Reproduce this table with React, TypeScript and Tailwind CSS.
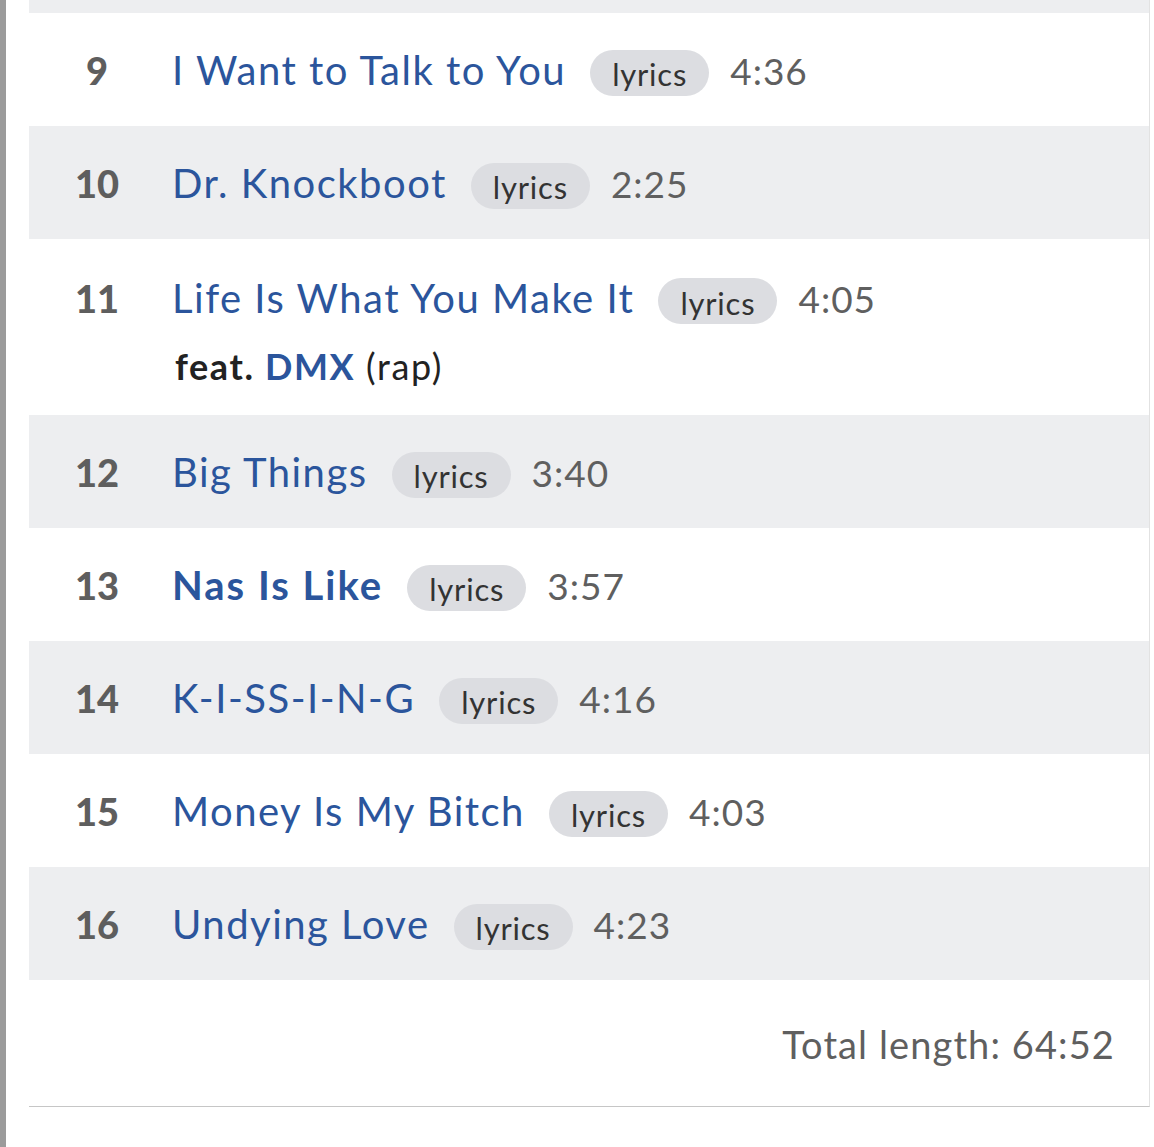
import React from "react";

type Track = {
  n: number;
  title: string;
  time: string;
  bold?: boolean;
  feat?: { name: string; role: string };
};

const tracks: Track[] = [
  { n: 9, title: "I Want to Talk to You", time: "4:36" },
  { n: 10, title: "Dr. Knockboot", time: "2:25" },
  { n: 11, title: "Life Is What You Make It", time: "4:05", feat: { name: "DMX", role: "rap" } },
  { n: 12, title: "Big Things", time: "3:40" },
  { n: 13, title: "Nas Is Like", time: "3:57", bold: true },
  { n: 14, title: "K-I-SS-I-N-G", time: "4:16" },
  { n: 15, title: "Money Is My Bitch", time: "4:03" },
  { n: 16, title: "Undying Love", time: "4:23" },
];

function Row({ t, shaded }: { t: Track; shaded: boolean }) {
  return (
    <div className={`flex ${t.feat ? "h-[176px] pt-[27px]" : "h-[113px] items-center"} ${shaded ? "bg-[#edeef0]" : "bg-white"}`}>
      <div className="w-[136px] shrink-0 text-center text-[38px] font-black text-[#5e5e5e] leading-[64px]">
        {t.n}
      </div>
      <div className="ml-[7px] flex flex-col">
        <div className="flex h-[64px] items-center">
          <span className={`text-[40px] text-[#2b559c] ${t.bold ? "font-bold tracking-[2px]" : "font-normal tracking-[1.5px]"}`}>
            {t.title}
          </span>
          <span className="ml-[24px] mt-[6px] flex h-[46px] items-center rounded-full bg-[#dcdde1] px-[22px] pt-[4px] text-[31px] tracking-[0.8px] text-[#333]">
            lyrics
          </span>
          <span className="ml-[21px] mt-[2px] text-[37px] tracking-[1px] text-[#5f5f5f]">{t.time}</span>
        </div>
        {t.feat && (
          <div className="ml-[3px] mt-[16px] text-[36px] tracking-[1.6px] text-[#222] leading-[40px]">
            <span className="font-bold">feat. </span>
            <span className="font-bold text-[#2b559c]">{t.feat.name}</span> ({t.feat.role})
          </div>
        )}
      </div>
    </div>
  );
}

export default function App() {
  return (
    <div className="flex h-[1147px] w-[1154px] bg-white font-['Lato',sans-serif]">
      <div className="w-[6px] shrink-0 bg-[#9b9b9b]" />
      <div className="ml-[23px] w-[1121px]">
        <div className="border-r border-b border-r-[#e2e2e2] border-b-[#c6c6c6]">
          <div className="h-[13px] bg-[#edeef0]" />
          {tracks.map((t, i) => (
            <Row key={t.n} t={t} shaded={i % 2 === 1} />
          ))}
          <div className="flex h-[126px] items-center justify-end pr-[34px] pt-[2px] text-[38px] tracking-[1.1px] text-[#5f5f5f]">
            Total length: 64:52
          </div>
        </div>
      </div>
    </div>
  );
}
